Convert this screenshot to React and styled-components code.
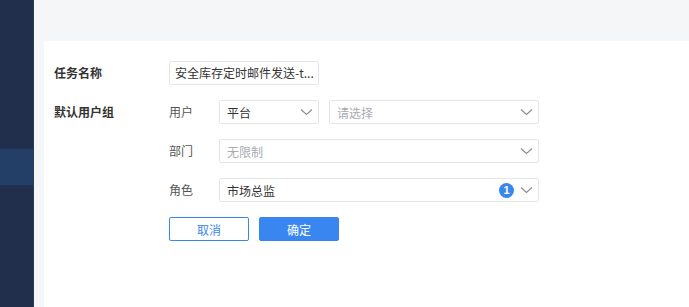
import React from "react";
import styled, { createGlobalStyle } from "styled-components";

const GlobalStyle = createGlobalStyle`
  html, body {
    margin: 0;
    padding: 0;
    background: #f5f6f8;
    font-family: "Noto Sans CJK SC", "Noto Sans", sans-serif;
  }
`;

const Page = styled.div`
  display: flex;
  width: 689px;
  height: 307px;
  overflow: hidden;
`;

const Sidebar = styled.nav`
  width: 33px;
  flex-shrink: 0;
  background: #222f4c;
  border-right: 1px solid #2c3a58;
  padding-top: 149px;
  box-sizing: content-box;
`;

const NavItem = styled.div`
  height: 36px;
  background: ${(p) => (p.active ? "#233f68" : "transparent")};
`;

const Main = styled.main`
  flex: 1;
  padding: 41px 0 0 10px;
  display: flex;
`;

const Card = styled.div`
  flex: 1;
  background: #fff;
  padding: 20px 0 0 10px;
`;

const FormRow = styled.div`
  display: flex;
  align-items: flex-start;
  margin-bottom: 15px;
`;

const Label = styled.div`
  width: 115px;
  height: 24px;
  line-height: 24px;
  font-size: 12px;
  font-weight: 700;
  color: #333;
  flex-shrink: 0;
`;

const Fields = styled.div`
  display: flex;
  flex-direction: column;
  gap: 15px;
`;

const SubRow = styled.div`
  display: flex;
  align-items: center;
  gap: 10px;
`;

const SubLabel = styled.div`
  width: 40px;
  font-size: 12px;
  color: #555;
  line-height: 24px;
`;

const Input = styled.div`
  width: ${(p) => p.width}px;
  height: 24px;
  box-sizing: border-box;
  border: 1px solid #e3e5e8;
  border-radius: 2px;
  padding: 0 5px;
  font-size: 12px;
  line-height: 22px;
  color: #333;
  white-space: nowrap;
  overflow: hidden;
`;

const Select = styled.div`
  width: ${(p) => p.width}px;
  height: 24px;
  box-sizing: border-box;
  border: 1px solid #e3e5e8;
  border-radius: 2px;
  padding: 0 5px 0 7px;
  display: flex;
  align-items: center;
  gap: 6px;
  font-size: 12px;
  color: ${(p) => (p.placeholder ? "#a8abb2" : "#333")};
`;

const Value = styled.span`
  flex: 1;
  white-space: nowrap;
`;

const Badge = styled.span`
  width: 15px;
  height: 15px;
  border-radius: 50%;
  background: #3a86f0;
  color: #fff;
  font-size: 11px;
  font-weight: 700;
  display: flex;
  align-items: center;
  justify-content: center;
  font-family: "Liberation Sans", Arial, sans-serif;
`;

const Buttons = styled.div`
  display: flex;
  gap: 10px;
  padding-left: 115px;
`;

const Button = styled.button`
  width: 80px;
  height: 24px;
  box-sizing: border-box;
  border-radius: 2px;
  font-family: inherit;
  font-size: 12px;
  cursor: pointer;
  border: 1px solid #3a86f0;
  background: ${(p) => (p.primary ? "#3a86f0" : "#fff")};
  color: ${(p) => (p.primary ? "#fff" : "#3a86f0")};
`;

const Chevron = () => (
  <svg width="13" height="8" viewBox="0 0 13 8" fill="none">
    <path d="M1 1.5l5.5 5 5.5-5" stroke="#8a8d93" strokeWidth="1.2" />
  </svg>
);

const App = () => {
  return (
    <>
      <GlobalStyle />
      <Page>
        <Sidebar>
          <NavItem active />
        </Sidebar>
        <Main>
          <Card>
            <FormRow>
              <Label>任务名称</Label>
              <Input width={150}>安全库存定时邮件发送-t...</Input>
            </FormRow>
            <FormRow>
              <Label>默认用户组</Label>
              <Fields>
                <SubRow>
                  <SubLabel>用户</SubLabel>
                  <Select width={100}>
                    <Value>平台</Value>
                    <Chevron />
                  </Select>
                  <Select width={210} placeholder>
                    <Value>请选择</Value>
                    <Chevron />
                  </Select>
                </SubRow>
                <SubRow>
                  <SubLabel>部门</SubLabel>
                  <Select width={320} placeholder>
                    <Value>无限制</Value>
                    <Chevron />
                  </Select>
                </SubRow>
                <SubRow>
                  <SubLabel>角色</SubLabel>
                  <Select width={320}>
                    <Value>市场总监</Value>
                    <Badge>1</Badge>
                    <Chevron />
                  </Select>
                </SubRow>
              </Fields>
            </FormRow>
            <Buttons>
              <Button>取消</Button>
              <Button primary>确定</Button>
            </Buttons>
          </Card>
        </Main>
      </Page>
    </>
  );
};

export default App;
